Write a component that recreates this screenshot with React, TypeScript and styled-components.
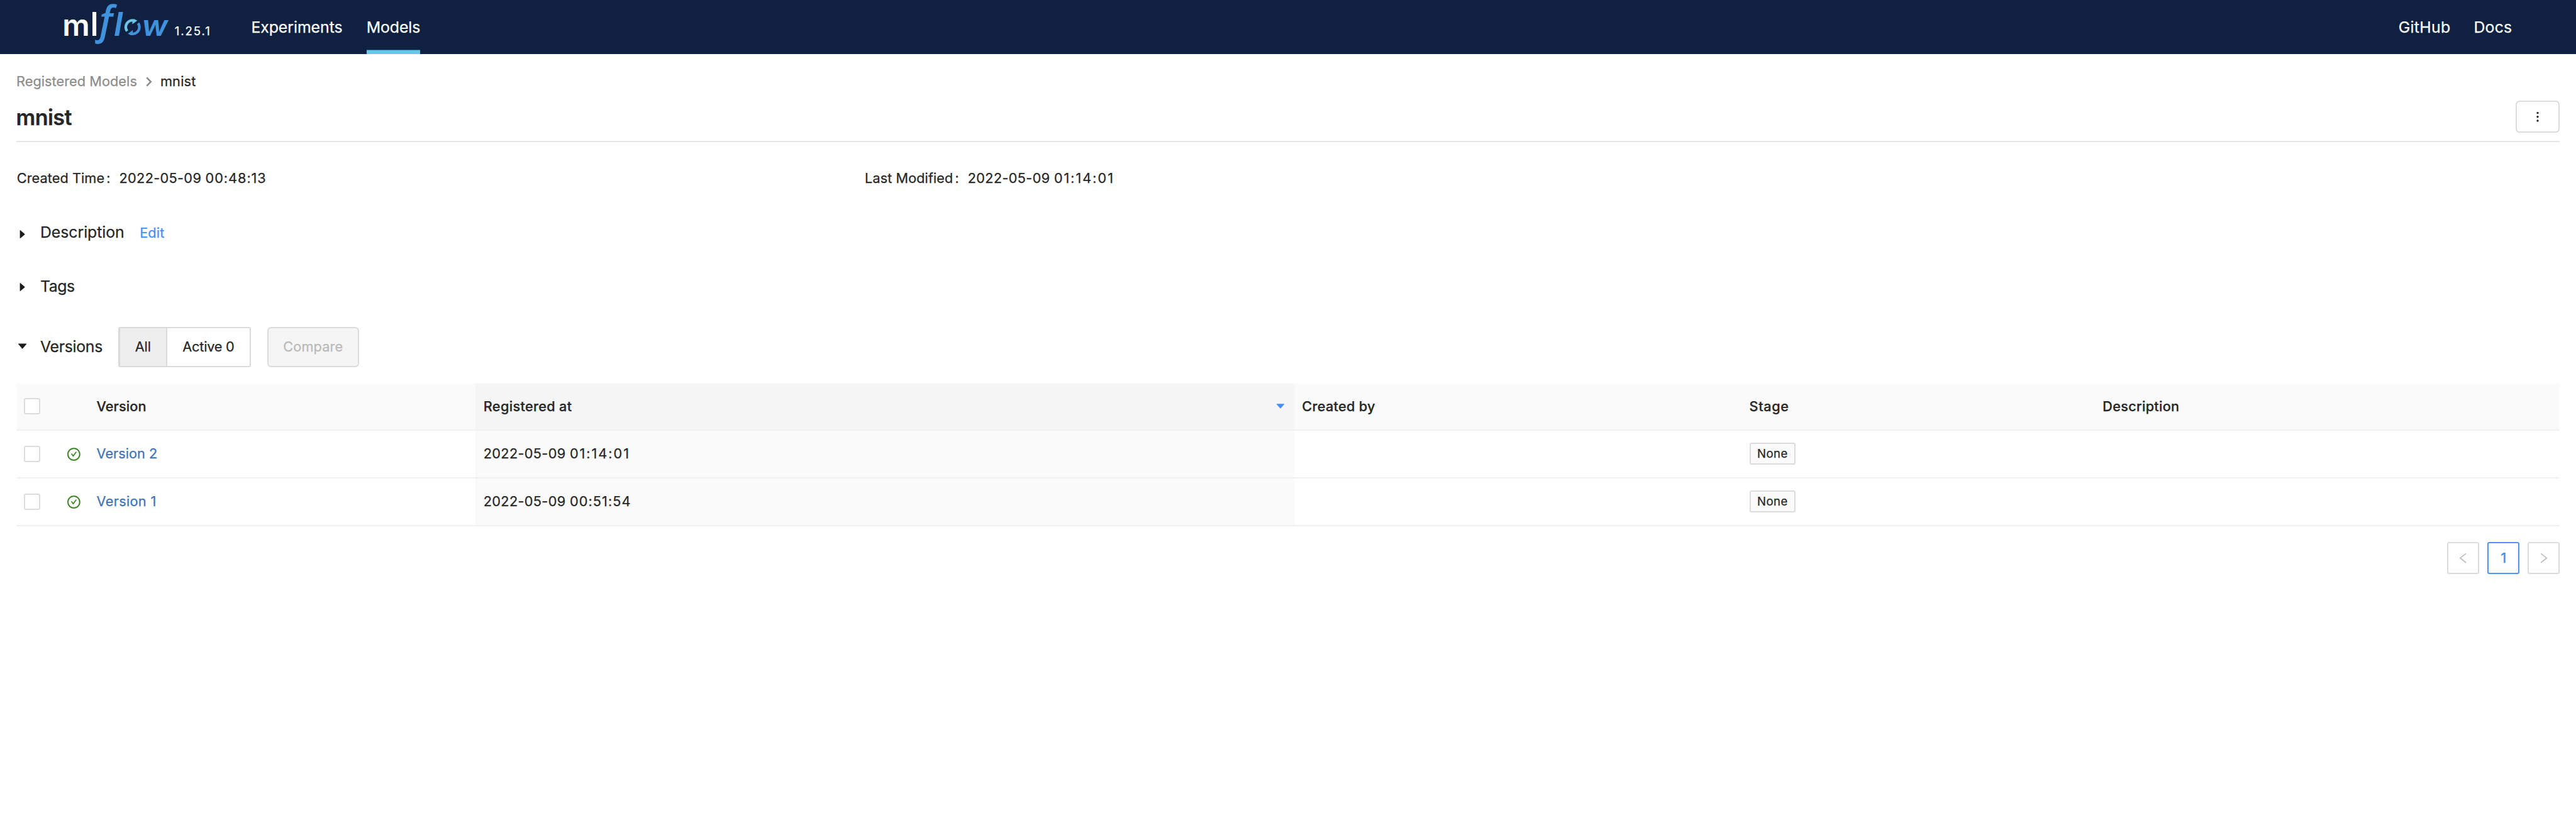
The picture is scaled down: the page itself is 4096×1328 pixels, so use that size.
import React from "react";
import styled, { createGlobalStyle } from "styled-components";

const GlobalStyle = createGlobalStyle`
  *, *::before, *::after { box-sizing: border-box; }
  body {
    margin: 0;
    background: #fff;
    color: #262626;
    font-family: Inter, "Liberation Sans", sans-serif;
    font-size: 21.73px;
    line-height: 35.2px;
    -webkit-text-stroke: 0.25px;
  }
`;

/* ---------- header ---------- */

const Header = styled.header`
  display: flex;
  align-items: center;
  height: 86.4px;
  padding: 0 101.6px 0 102.4px;
  background: #102040;
  color: #fff;
`;

const Logo = styled.svg`
  display: block;
  flex: none;
  align-self: flex-start;
  margin-top: 4.8px;
  width: 166.4px;
  height: 67.2px;
  overflow: visible;
  -webkit-text-stroke: 0;
`;

const AppVersion = styled.span`
  width: 57.6px;
  margin-left: 9px;
  padding-top: 13.6px;
  font-size: 18.62px;
  letter-spacing: 1.91px;
`;

const Nav = styled.nav<{ $gap: number; $start: number | "auto" }>`
  display: flex;
  gap: ${(p) => p.$gap}px;
  height: 100%;
  margin-left: ${(p) => (p.$start === "auto" ? "auto" : `${p.$start}px`)};
`;

const NavLink = styled.a<{ $active?: boolean; $tracking?: number }>`
  display: flex;
  align-items: center;
  height: 100%;
  font-size: 24.83px;
  letter-spacing: ${(p) => p.$tracking ?? 0}px;
  box-shadow: ${(p) => (p.$active ? "inset 0 -6.4px 0 #6bc5e8" : "none")};
`;

/* ---------- page ---------- */

const Page = styled.main`
  display: flex;
  flex-direction: column;
  padding: 25.6px 25.6px 0;
`;

const Breadcrumb = styled.div`
  display: flex;
  align-items: center;
  height: 35.2px;
`;

const Crumb = styled.span<{ $muted?: boolean; $tracking: number }>`
  padding-left: ${(p) => (p.$muted ? 0.4 : 0)}px;
  color: ${(p) => (p.$muted ? "#8c8c8c" : "inherit")};
  letter-spacing: ${(p) => p.$tracking}px;
`;

const CrumbChevron = styled.svg`
  flex: none;
  width: 9.6px;
  height: 16px;
  margin: 0 13.4px 0 14px;
`;

const TitleBar = styled.div`
  display: flex;
  align-items: center;
  justify-content: space-between;
  margin-top: 12.8px;
  padding-bottom: 12.8px;
  border-bottom: 2px solid #e6e6e6;
`;

const Title = styled.h1`
  margin: 0;
  padding-top: 2.4px;
  font-size: 34.14px;
  font-weight: 600;
  letter-spacing: -0.6px;
`;

const MenuButton = styled.button`
  display: flex;
  align-items: center;
  justify-content: center;
  width: 70.4px;
  height: 51.2px;
  padding: 0;
  border: 2px solid #dcdcdc;
  border-radius: 6.4px;
  background: #fff;
  box-shadow: 0 3.2px 0 rgba(0, 0, 0, 0.016);
`;

const Metadata = styled.dl`
  display: grid;
  grid-template-columns: repeat(3, 1fr);
  margin: 39.7px 0 0;
`;

const MetaItem = styled.div`
  display: flex;
  padding-left: 1.2px;
`;

const MetaLabel = styled.dt`
  letter-spacing: 0.06px;
`;

const MetaColon = styled.span`
  width: 23.3px;
  padding-left: 3px;
`;

const MetaValue = styled.dd`
  margin: 0;
`;

const DatePart = styled.span`
  white-space: pre;
  letter-spacing: 0.32px;
`;

const TimePart = styled.span<{ $tracking: number }>`
  letter-spacing: ${(p) => p.$tracking}px;
`;

const Section = styled.section<{ $top: number; $height: number }>`
  display: flex;
  align-items: center;
  height: ${(p) => p.$height}px;
  margin-top: ${(p) => p.$top}px;
`;

const SectionHeading = styled.div`
  display: flex;
  align-items: baseline;
`;

const SectionCaret = styled.svg<{ $shift: number }>`
  display: block;
  flex: none;
  width: 19.2px;
  height: 19.2px;
  margin: ${(p) => p.$shift}px 19.2px 0 0;
`;

const SectionTitle = styled.span<{ $tracking?: number }>`
  font-size: 24.83px;
  letter-spacing: ${(p) => p.$tracking ?? 0}px;
`;

const EditLink = styled.a`
  margin-left: 24.4px;
  color: #4390f7;
  letter-spacing: 0.13px;
`;

const Segmented = styled.div`
  display: flex;
  height: 64px;
  margin-left: 24.6px;
`;

const Segment = styled.button<{ $selected?: boolean; $width: number; $tracking: number }>`
  width: ${(p) => p.$width}px;
  height: 100%;
  padding: 0;
  border: 2px solid #dadada;
  border-left-width: ${(p) => (p.$selected ? 3 : 2)}px;
  border-right-width: ${(p) => (p.$selected ? 0 : 2)}px;
  border-radius: ${(p) => (p.$selected ? "3.2px 0 0 3.2px" : "0 3.2px 3.2px 0")};
  background: ${(p) => (p.$selected ? "#eeeeee" : "#fff")};
  color: #262626;
  font: inherit;
  letter-spacing: ${(p) => p.$tracking}px;
`;

const CompareButton = styled.button`
  width: 145.6px;
  height: 64px;
  margin-left: 26px;
  padding: 0;
  border: 2px solid #dcdcdc;
  border-radius: 6.4px;
  background: #f5f5f5;
  color: #b9b9b9;
  font: inherit;
  letter-spacing: 0.1px;
`;

/* ---------- table ---------- */

const Table = styled.div`
  margin-top: 25.6px;
`;

const Row = styled.div<{ $head?: boolean }>`
  display: grid;
  grid-template-columns: 68.8px 46.4px 615.2px 1301.6px 711.2px 561.8px 1fr;
  height: ${(p) => (p.$head ? 75.2 : 76)}px;
  border-radius: ${(p) => (p.$head ? "3.2px 3.2px 0 0" : "0")};
  background: ${(p) => (p.$head ? "#fafafa" : "transparent")};
  font-weight: ${(p) => (p.$head ? 500 : 400)};
`;

const Cell = styled.div<{ $fill?: string; $tracking?: number }>`
  display: flex;
  align-items: center;
  justify-content: space-between;
  padding: 0 12.8px;
  border-bottom: 2px solid #f1f1f1;
  background: ${(p) => p.$fill ?? "transparent"};
  letter-spacing: ${(p) => p.$tracking ?? 0}px;
`;

const Checkbox = styled.span`
  width: 25.6px;
  height: 25.6px;
  border: 2px solid #dcdcdc;
  border-radius: 3.2px;
  background: #fff;
`;

const StatusIcon = styled.svg`
  display: block;
  flex: none;
  width: 20.8px;
  height: 20.8px;
  margin-top: 1.2px;
  stroke: #34821f;
  stroke-width: 12px;
`;

const SortCaret = styled.svg`
  display: block;
  width: 18px;
  height: 18px;
`;

const VersionLink = styled.a<{ $tracking: number }>`
  color: #3c74ba;
  letter-spacing: ${(p) => p.$tracking}px;
`;

const StageTag = styled.span`
  display: flex;
  align-items: center;
  justify-content: center;
  width: 73.6px;
  height: 35.2px;
  border: 2px solid #dcdcdc;
  border-radius: 3.2px;
  background: #fafafa;
  font-size: 18.62px;
  letter-spacing: 0.4px;
`;

/* ---------- pagination ---------- */

const Pagination = styled.div`
  display: flex;
  justify-content: flex-end;
  gap: 12.8px;
  margin-top: 25.6px;
`;

const PageButton = styled.button<{ $current?: boolean }>`
  display: flex;
  align-items: center;
  justify-content: center;
  width: 51.2px;
  height: 51.2px;
  padding: 0;
  border: 2px solid ${(p) => (p.$current ? "#4a94f8" : "#dcdcdc")};
  border-radius: 3.2px;
  background: #fff;
  color: #4390f7;
  font: inherit;
  font-weight: 500;
`;

const ArrowIcon = styled.svg`
  display: block;
  width: 19.2px;
  height: 19.2px;
`;

const CARET_RIGHT =
  "M715.8 493.5L335 165.1c-14.2-12.2-35-1.2-35 18.5v656.8c0 19.7 20.8 30.7 35 18.5l380.8-328.4c10.9-9.4 10.9-27.6 0-37z";
const CARET_DOWN =
  "M840.4 300H183.6c-19.7 0-30.7 20.8-18.5 35l328.4 380.8c9.4 10.9 27.5 10.9 37 0L858.9 335c12.2-14.2 1.2-35-18.5-35z";
const ARROW_LEFT =
  "M724 218.3V141c0-6.7-7.7-10.4-12.9-6.3L260.3 486.8a31.86 31.86 0 000 50.3l450.8 352.1c5.3 4.1 12.9.4 12.9-6.3v-77.3c0-4.9-2.3-9.6-6.1-12.6l-360-281 360-281.1c3.8-3 6.1-7.7 6.1-12.6z";
const ARROW_RIGHT =
  "M765.7 486.8L314.9 134.7A7.97 7.97 0 00302 141v77.3c0 4.9 2.3 9.6 6.1 12.6l360 281.1-360 281.1c-3.9 3-6.1 7.7-6.1 12.6V883c0 6.7 7.7 10.4 12.9 6.3l450.8-352.1a31.96 31.96 0 000-50.4z";

function MlflowLogo() {
  return (
    <Logo viewBox="0 0 208 84">
      <g fontFamily="Inter, sans-serif" fontWeight={600} fontSize={100}>
        <text fill="#fff" transform="matrix(.603 0 0 .595 -3.6 64.7)">m</text>
        <text fill="#fff" transform="matrix(.6 0 0 .653 52.1 64.7)">l</text>
        <text fill="#4192dc" fontFamily="'Open Sans', sans-serif" fontStyle="italic" transform="matrix(.763 0 0 .792 69.9 63)">f</text>
        <text fill="#4192dc" fontStyle="italic" transform="matrix(.68 0 0 .66 98.8 64.7)">l</text>
        <text fill="#4192dc" fontStyle="italic" transform="matrix(.617 0 0 .576 154.3 64.7)">w</text>
      </g>
      <g fill="#6cc5e6">
        <path d="M125.1 55.6A13.4 13.4 0 0 1 139.5 34.8" fill="none" stroke="#6cc5e6" strokeWidth={5.6} />
        <path d="M139 31.7L145.5 34.6L135.4 41.9L135.8 36Z" />
      </g>
      <g fill="#4192dc" transform="rotate(180 136 47.7)">
        <path d="M125.1 55.6A13.4 13.4 0 0 1 139.5 34.8" fill="none" stroke="#4192dc" strokeWidth={5.6} />
        <path d="M139 31.7L145.5 34.6L135.4 41.9L135.8 36Z" />
      </g>
    </Logo>
  );
}

function Timestamp({ date, time, tracking }: { date: string; time: string; tracking: number }) {
  return (
    <span>
      <DatePart>{date + " "}</DatePart>
      <TimePart $tracking={tracking}>{time}</TimePart>
    </span>
  );
}

const versions = [
  { name: "Version 2", nameTracking: 0, date: "2022-05-09", time: "01:14:01", tracking: 1.95, stage: "None" },
  { name: "Version 1", nameTracking: 0.3, date: "2022-05-09", time: "00:51:54", tracking: 1.06, stage: "None" },
];

export default function App() {
  return (
    <>
      <GlobalStyle />
      <Header>
        <MlflowLogo />
        <AppVersion>1.25.1</AppVersion>
        <Nav $gap={38.2} $start={64}>
          <NavLink $tracking={-0.06}>Experiments</NavLink>
          <NavLink $active $tracking={-0.1}>Models</NavLink>
        </Nav>
        <Nav $gap={37} $start="auto">
          <NavLink $tracking={0.29}>GitHub</NavLink>
          <NavLink $tracking={0.2}>Docs</NavLink>
        </Nav>
      </Header>

      <Page>
        <Breadcrumb>
          <Crumb $muted $tracking={0.046}>Registered Models</Crumb>
          <CrumbChevron viewBox="0 0 9.6 16">
            <path d="M1.3 1.3L7.8 8L1.3 14.7" fill="none" stroke="#8c8c8c" strokeWidth={2.6} />
          </CrumbChevron>
          <Crumb $tracking={0.195}>mnist</Crumb>
        </Breadcrumb>

        <TitleBar>
          <Title>mnist</Title>
          <MenuButton>
            <svg width="6" height="18" viewBox="0 0 6 18" fill="#262626">
              <circle cx="3" cy="2.6" r="1.7" />
              <circle cx="3" cy="8.8" r="1.7" />
              <circle cx="3" cy="15" r="1.7" />
            </svg>
          </MenuButton>
        </TitleBar>

        <Metadata>
          <MetaItem>
            <MetaLabel>Created Time</MetaLabel>
            <MetaColon>:</MetaColon>
            <MetaValue><Timestamp date="2022-05-09" time="00:48:13" tracking={0.93} /></MetaValue>
          </MetaItem>
          <MetaItem>
            <MetaLabel>Last Modified</MetaLabel>
            <MetaColon>:</MetaColon>
            <MetaValue><Timestamp date="2022-05-09" time="01:14:01" tracking={1.95} /></MetaValue>
          </MetaItem>
        </Metadata>

        <Section $top={49.3} $height={40}>
          <SectionCaret $shift={5.2} viewBox="0 0 1024 1024" fill="#1c1c1c"><path d={CARET_RIGHT} /></SectionCaret>
          <SectionHeading>
            <SectionTitle $tracking={-0.05}>Description</SectionTitle>
            <EditLink>Edit</EditLink>
          </SectionHeading>
        </Section>

        <Section $top={45.6} $height={40}>
          <SectionCaret $shift={2} viewBox="0 0 1024 1024" fill="#1c1c1c"><path d={CARET_RIGHT} /></SectionCaret>
          <SectionTitle $tracking={-0.42}>Tags</SectionTitle>
        </Section>

        <Section $top={44.2} $height={64}>
          <SectionCaret $shift={-3.4} viewBox="0 0 1024 1024" fill="#1c1c1c"><path d={CARET_DOWN} /></SectionCaret>
          <SectionTitle $tracking={-0.31}>Versions</SectionTitle>
          <Segmented>
            <Segment $selected $width={76.4} $tracking={-0.12}>All</Segment>
            <Segment $width={135} $tracking={-0.21}>Active 0</Segment>
          </Segmented>
          <CompareButton disabled>Compare</CompareButton>
        </Section>

        <Table>
          <Row $head>
            <Cell><Checkbox /></Cell>
            <Cell />
            <Cell $tracking={0.03}>Version</Cell>
            <Cell $fill="#f5f5f5" $tracking={0.3}>
              Registered at
              <SortCaret viewBox="0 0 1024 1024" fill="#4390f7"><path d={CARET_DOWN} /></SortCaret>
            </Cell>
            <Cell $tracking={0.26}>Created by</Cell>
            <Cell $tracking={0.6}>Stage</Cell>
            <Cell $tracking={0.25}>Description</Cell>
          </Row>
          {versions.map((v) => (
            <Row key={v.name}>
              <Cell><Checkbox /></Cell>
              <Cell>
                <StatusIcon viewBox="58 58 908 908" fill="#34821f">
                  <path d="M699 353h-46.9c-10.2 0-19.9 4.9-25.9 13.3L469 584.3l-71.2-98.8c-6-8.3-15.6-13.3-25.9-13.3H325c-6.5 0-10.3 7.4-6.5 12.7l124.6 172.8a31.8 31.8 0 0051.7 0l210.6-292c3.9-5.3.1-12.7-6.4-12.7z" />
                  <path d="M512 64C264.6 64 64 264.6 64 512s200.6 448 448 448 448-200.6 448-448S759.4 64 512 64zm0 820c-205.4 0-372-166.6-372-372s166.6-372 372-372 372 166.6 372 372-166.6 372-372 372z" />
                </StatusIcon>
              </Cell>
              <Cell><VersionLink $tracking={v.nameTracking}>{v.name}</VersionLink></Cell>
              <Cell $fill="#fafafa">
                <Timestamp date={v.date} time={v.time} tracking={v.tracking} />
              </Cell>
              <Cell />
              <Cell><StageTag>{v.stage}</StageTag></Cell>
              <Cell />
            </Row>
          ))}
        </Table>

        <Pagination>
          <PageButton>
            <ArrowIcon viewBox="64 64 896 896" fill="#bfbfbf"><path d={ARROW_LEFT} /></ArrowIcon>
          </PageButton>
          <PageButton $current>1</PageButton>
          <PageButton>
            <ArrowIcon viewBox="64 64 896 896" fill="#bfbfbf"><path d={ARROW_RIGHT} /></ArrowIcon>
          </PageButton>
        </Pagination>
      </Page>
    </>
  );
}
